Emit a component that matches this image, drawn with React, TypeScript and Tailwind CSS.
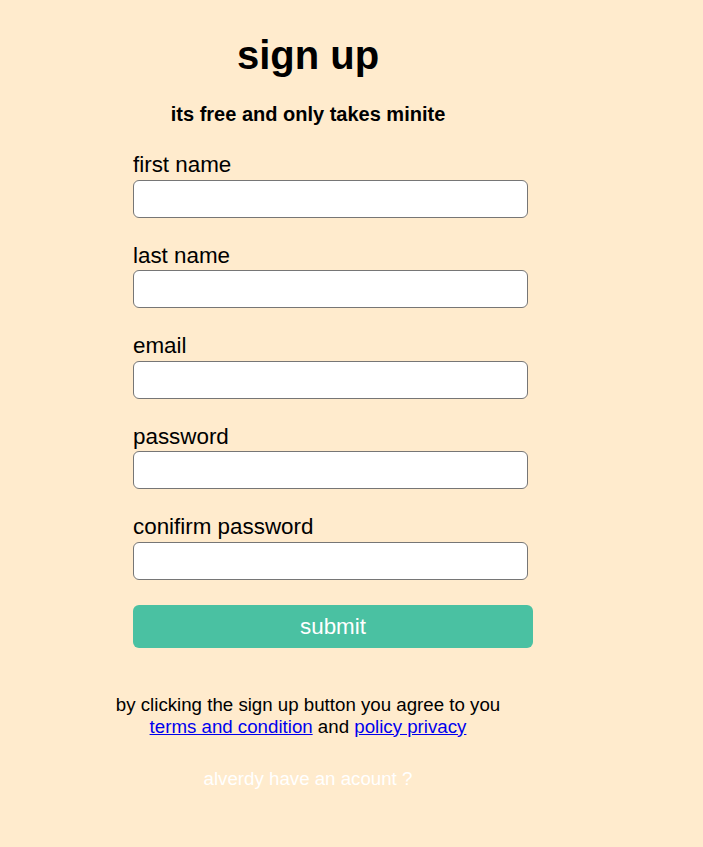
import React from 'react';

const fields = ['first name', 'last name', 'email', 'password', 'conifirm password'];

export default function App() {
  return (
    <div className="min-h-[847px] bg-[#ffebcd] font-['Liberation_Sans',Arial,sans-serif] text-black">
      <div className="ml-[133px] w-[350px] pt-[32px]">
        {/* заголовок */}
        <h1 className="text-center text-[40px] font-bold leading-[46px]">sign up</h1>
        <p className="mt-[25px] text-center text-[20px] font-bold leading-[23px]">
          its free and only takes minite
        </p>

        {/* форма */}
        <form className="mt-[26px]" onSubmit={(e) => e.preventDefault()}>
          {fields.map((label) => (
            <div key={label} className="mb-[25px]">
              <label className="block text-[22.4px] leading-[26px]">{label}</label>
              <input
                type="text"
                className="mt-[1.5px] block h-[38px] w-[395px] rounded-[6px] border border-[#767676] bg-white px-2"
              />
            </div>
          ))}
          <button
            type="submit"
            className="mt-[0.5px] h-[43px] w-[400px] rounded-[6px] bg-[#4ac1a2] text-[22.4px] text-white"
          >
            submit
          </button>
        </form>

        {/* подвал */}
        <div className="mt-[46px] flex flex-col items-center text-[18.7px] leading-[21.5px]">
          <span className="whitespace-nowrap">by clicking the sign up button you agree to you</span>
          <span className="whitespace-nowrap">
            <a href="#" className="text-[#0000ee] underline">terms and condition</a> and{' '}
            <a href="#" className="text-[#0000ee] underline">policy privacy</a>
          </span>
          <span className="mt-[31px] whitespace-nowrap text-white">alverdy have an acount ?</span>
        </div>
      </div>
    </div>
  );
}
